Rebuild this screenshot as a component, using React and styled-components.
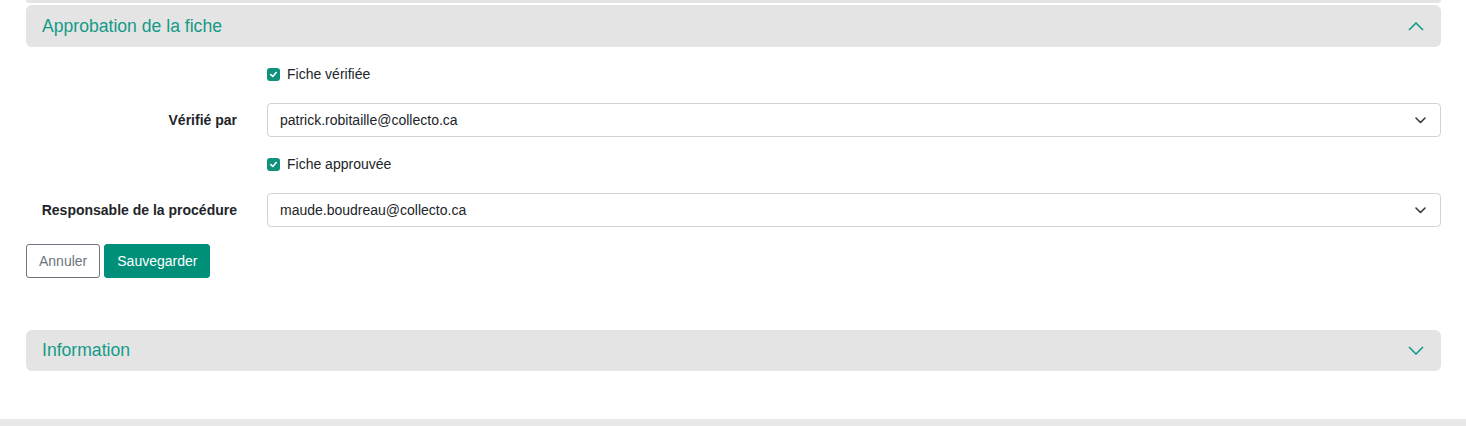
import React from "react";
import styled, { createGlobalStyle } from "styled-components";

const Global = createGlobalStyle`
  html, body { margin: 0; padding: 0; background: #fff; }
  body { font-family: "Liberation Sans", Arial, sans-serif; color: #212529; }
`;

const Page = styled.div`
  width: 1466px;
  height: 426px;
  display: flex;
  flex-direction: column;
  overflow: hidden;
`;

const Content = styled.div`
  padding: 0 25px 0 26px;
  display: flex;
  flex-direction: column;
  flex: 1;
`;

const PrevCardEnd = styled.div`
  height: 3px;
  background: #e4e4e4;
  border-radius: 0 0 6px 6px;
  margin-bottom: 2px;
`;

const AccordionHeader = styled.div`
  height: ${(p) => p.$h || 42}px;
  background: #e4e4e4;
  border-radius: 6px;
  display: flex;
  align-items: center;
  justify-content: space-between;
  padding: 0 17px 0 16px;
  box-sizing: border-box;
  margin-top: ${(p) => p.$mt || 0}px;
`;

const Title = styled.span`
  font-family: "Liberation Sans", Arial, sans-serif;
  font-size: 17.6px;
  color: #149a88;
`;

const Form = styled.div`
  display: grid;
  grid-template-columns: 211px 1fr;
  column-gap: 30px;
  row-gap: 17px;
  margin-top: 17px;
  align-items: center;
`;

const Label = styled.label`
  font-size: 14px;
  font-weight: bold;
  text-align: right;
  color: #212529;
`;

const CheckRow = styled.div`
  grid-column: 2;
  height: 20px;
  padding-bottom: 2px;
  display: flex;
  align-items: center;
  gap: 7px;
  font-size: 14px;
  color: #212529;
`;

const Box = styled.span`
  width: 13px;
  height: 13px;
  border-radius: 3px;
  background: #10917c;
  display: inline-flex;
  align-items: center;
  justify-content: center;
`;

const Select = styled.div`
  height: 34px;
  box-sizing: border-box;
  border: 1px solid #ced4da;
  border-radius: 4px;
  display: flex;
  align-items: center;
  justify-content: space-between;
  padding: 0 14px 0 12px;
  font-size: 14px;
  color: #212529;
`;

const Buttons = styled.div`
  display: flex;
  gap: 4px;
  margin-top: 17px;
`;

const Button = styled.button`
  height: 34px;
  box-sizing: border-box;
  padding: 0 12px;
  font-family: "Liberation Sans", Arial, sans-serif;
  font-size: 14px;
  border-radius: 3px;
  border: 1px solid ${(p) => (p.$primary ? "#009079" : "#6c757d")};
  background: ${(p) => (p.$primary ? "#009079" : "#fff")};
  color: ${(p) => (p.$primary ? "#fff" : "#6c757d")};
`;

const BottomBar = styled.div`
  height: 7px;
  background: #e8e8e8;
  margin-top: auto;
`;

const Check = () => (
  <Box>
    <svg width="9" height="9" viewBox="0 0 10 10">
      <path d="M2 5.2 L4.2 7.2 L8 2.8" fill="none" stroke="#fff" strokeWidth="1.8" strokeLinecap="round" strokeLinejoin="round" />
    </svg>
  </Box>
);

const Chevron = ({ up, color = "#139a88" }) => (
  <svg width="16" height="9" viewBox="0 0 16 9">
    <path d={up ? "M1 8 L8 1 L15 8" : "M1 1 L8 8 L15 1"} fill="none" stroke={color} strokeWidth="1.6" />
  </svg>
);

const SmallChevron = () => (
  <svg width="11" height="7" viewBox="0 0 11 7">
    <path d="M1 1 L5.5 5.5 L10 1" fill="none" stroke="#343a40" strokeWidth="1.6" strokeLinecap="round" strokeLinejoin="round" />
  </svg>
);

export default function App() {
  return (
    <Page>
      <Global />
      <Content>
        <PrevCardEnd />
        <AccordionHeader>
          <Title>Approbation de la fiche</Title>
          <Chevron up />
        </AccordionHeader>
        <Form>
          <CheckRow>
            <Check />
            Fiche vérifiée
          </CheckRow>
          <Label>Vérifié par</Label>
          <Select>
            patrick.robitaille@collecto.ca
            <SmallChevron />
          </Select>
          <CheckRow>
            <Check />
            Fiche approuvée
          </CheckRow>
          <Label>Responsable de la procédure</Label>
          <Select>
            maude.boudreau@collecto.ca
            <SmallChevron />
          </Select>
        </Form>
        <Buttons>
          <Button>Annuler</Button>
          <Button $primary>Sauvegarder</Button>
        </Buttons>
        <AccordionHeader $mt={52} $h={41}>
          <Title>Information</Title>
          <Chevron />
        </AccordionHeader>
      </Content>
      <BottomBar />
    </Page>
  );
}
